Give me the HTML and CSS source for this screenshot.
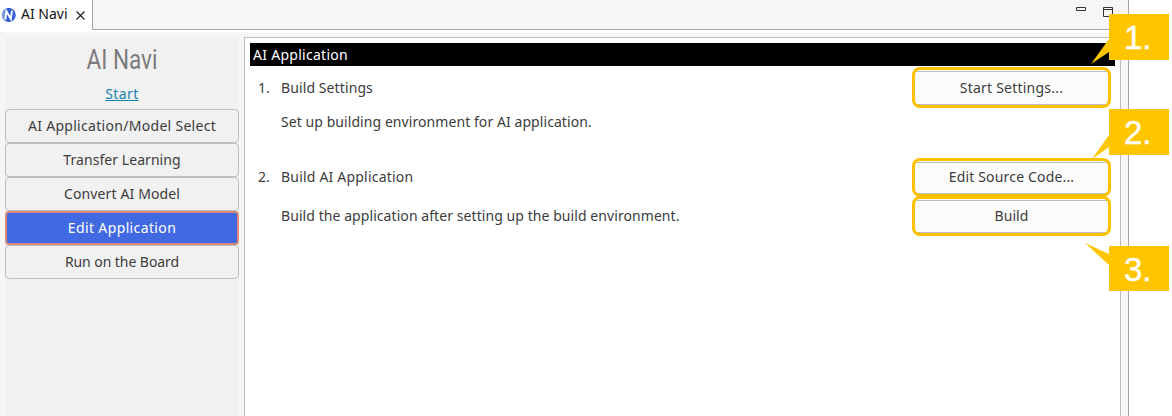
FILE: index.html
```html
<!DOCTYPE html>
<html lang="en">
<head>
<meta charset="utf-8">
<title>AI Navi</title>
<link rel="stylesheet" href="styles.css">
</head>
<body>
<div class="window">
  <header class="tabs">
    <div class="tab">
      <svg class="logo" width="15" height="15" viewBox="0 0 15 15"><defs><linearGradient id="g"><stop offset="0" stop-color="#9ab6ea"/><stop offset=".45" stop-color="#2a56d0"/><stop offset="1" stop-color="#3c64dc"/></linearGradient></defs><circle cx="7.7" cy="7" r="7.1" fill="url(#g)"/><path d="M4.2 11.5 5.4 3.2 9.8 10.9 11 2.6" fill="none" stroke="#fff" stroke-width="1.9"/></svg>
      <span class="tab-name">AI Navi</span>
      <svg class="close" width="9" height="9" viewBox="0 0 9 9"><path d="M.5.5 8.5 8.5M8.5.5.5 8.5" stroke="#222" stroke-width="1.2"/></svg>
    </div>
    <div class="tools">
      <svg width="37" height="10" viewBox="0 0 37 10" fill="none" stroke="#333"><path d="M.5.5h9v3h-9zM27.5.5h9v9h-9zM27.5 2.5h9"/></svg>
    </div>
  </header>
  <div class="body">
    <nav class="sidebar">
      <h1 class="title">AI Navi</h1>
      <a class="start">Start</a>
      <div class="step s1">AI Application/Model Select</div>
      <div class="step s2">Transfer Learning</div>
      <div class="step s3">Convert AI Model</div>
      <div class="step s4 selected">Edit Application</div>
      <div class="step s5">Run on the Board</div>
    </nav>
    <main class="panel">
      <h2 class="heading">AI Application</h2>
      <section class="task first">
        <span class="num">1.</span>
        <div class="info"><p class="t1">Build Settings</p><p class="t2">Set up building environment for AI application.</p></div>
        <div class="actions"><div class="action b1">Start Settings...</div></div>
      </section>
      <section class="task second">
        <span class="num">2.</span>
        <div class="info"><p class="t3">Build AI Application</p><p class="t4">Build the application after setting up the build environment.</p></div>
        <div class="actions"><div class="action b2">Edit Source Code...</div><div class="action b3">Build</div></div>
      </section>
    </main>
  </div>
</div>
<div class="callout c1"><svg class="tail" width="24" height="46"><path d="M24 25V38L6 50z"/></svg>1.</div>
<div class="callout c2"><svg class="tail" width="24" height="46"><path d="M24 26V38L7 50z"/></svg>2.</div>
<div class="callout c3"><svg class="tail" width="24" height="46"><path d="M24 8V19L0-3z"/></svg>3.</div>
</body>
</html>
```
FILE: styles.css
```css
* { box-sizing: border-box; margin: 0; }
body { width: 1172px; height: 416px; overflow: hidden; position: relative; background: #fff; color: #3c3c3c; font: 14px/18px "Noto Sans", sans-serif; }
.window { width: 1129px; height: 416px; display: flex; flex-direction: column; background: #f6f6f6; border-right: 1px solid #a6a6a6; }
.tabs { height: 32px; display: flex; background: #fff; }
.tab { width: 93px; height: 30px; display: flex; align-items: center; padding-left: 1px; border-right: 1px solid #a6a6a6; color: #111; }
.logo { margin-right: 5px; }
.tab-name { width: 46px; white-space: nowrap; line-height: 20px; padding-bottom: 2px; }
.close { margin-left: 9px; }
.tools { flex: 1; height: 30px; display: flex; justify-content: flex-end; padding: 7px 15px 0 0; background: #f6f6f6; border-bottom: 1px solid #a6a6a6; }
.body { flex: 1; display: flex; gap: 5px; padding: 5px 7px 0 5px; }
.sidebar { width: 234px; display: flex; flex-direction: column; background: #f1f1f1; }
.title { height: 47px; text-align: center; font: 400 27px/47px Roboto, sans-serif; color: #7b7b7b; transform: scaleX(.835); }
.start { height: 25px; line-height: 20px; text-align: center; color: #1682ab; text-decoration: underline; letter-spacing: .4px; }
.step { height: 34px; text-align: center; line-height: 32px; border: 1px solid #bebebe; border-radius: 4px; white-space: nowrap; }
.s1 { letter-spacing: .3px; }
.s2 { letter-spacing: .06px; }
.s3 { letter-spacing: .13px; }
.s4 { letter-spacing: .37px; }
.s5 { letter-spacing: -.06px; }
.selected { background: #4169e1; color: #fff; border: 2px solid #d98878; line-height: 30px; }
.panel { flex: 1; padding: 5px 5px 0; background: #fff; border: 1px solid #bdbdbd; border-bottom: 0; }
.heading { height: 23px; padding-left: 3px; background: #000; color: #fff; font-size: 14px; font-weight: 400; line-height: 23px; letter-spacing: .28px; }
.task { display: flex; padding-left: 8px; padding-right: 4px; }
.first { height: 92px; padding-top: 1px; }
.second { height: 80px; }
.num { width: 23px; padding-top: 12px; }
.info { flex: 1; }
.first .info { padding-top: 12px; }
.second .info { padding-top: 10px; }
.second .num { padding-top: 10px; }
.info p { white-space: nowrap; }
.info p + p { margin-top: 16px; }
.second p + p { margin-top: 21px; }
.t1 { letter-spacing: .1px; }
.t2, .t4 { letter-spacing: .07px; }
.t3 { letter-spacing: .2px; }
.actions { width: 199px; }
.action { height: 41px; border: 3px solid #ffc000; border-radius: 8px; background: linear-gradient(#fff 0 1px, #bebebe 1px 2px, #fcfcfc 2px calc(100% - 1px), #bebebe calc(100% - 1px)); line-height: 36px; text-align: center; }
.b1 { letter-spacing: .22px; }
.b2 { height: 39px; line-height: 32px; letter-spacing: .17px; }
.b3 { height: 40px; margin-top: -1px; line-height: 33px; letter-spacing: .1px; }
.callout { position: absolute; left: 1109px; width: 60px; height: 46px; padding-left: 15px; background: #ffc600; color: #fff; font: 33px/48px "Liberation Sans", sans-serif; -webkit-text-stroke: .4px #fff; }
.c1 { top: 14px; }
.c2 { top: 109px; }
.c3 { top: 246px; height: 45px; line-height: 47px; }
.tail { position: absolute; left: -24px; top: 0; overflow: visible; fill: #ffc600; }
```
